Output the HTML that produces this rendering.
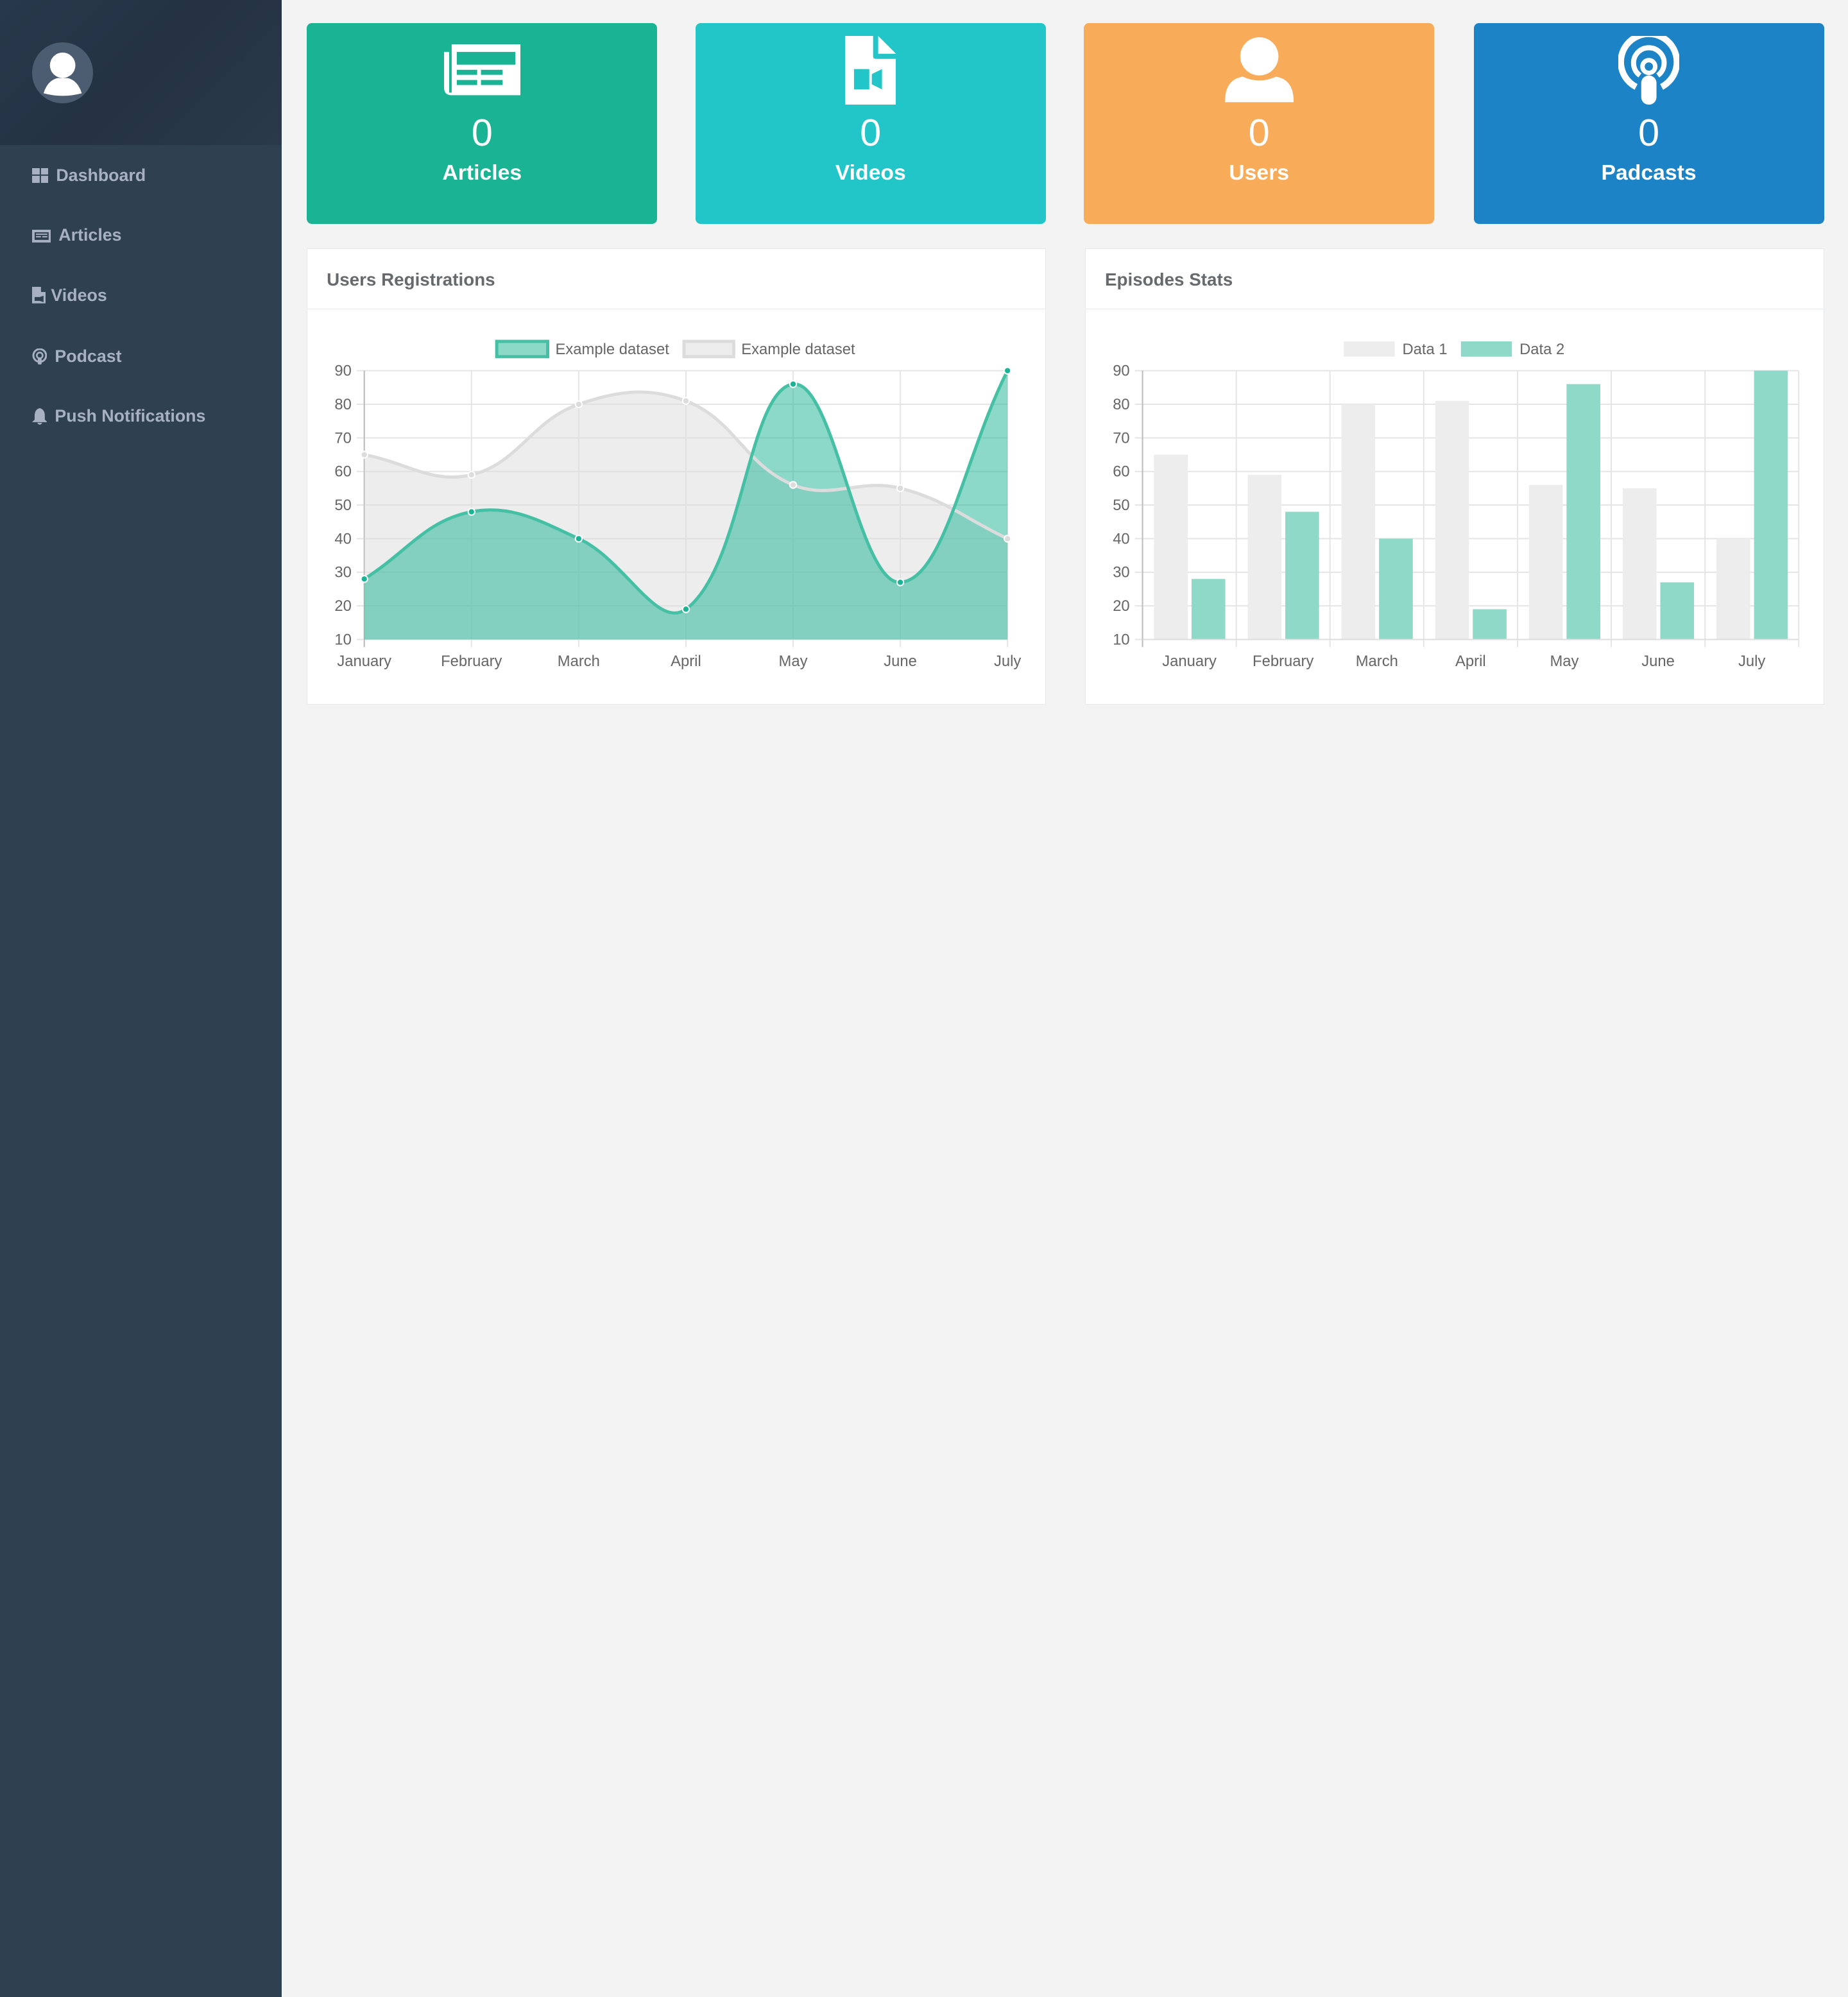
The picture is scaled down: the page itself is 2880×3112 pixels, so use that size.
<!DOCTYPE html>
<html><head><meta charset="utf-8">
<style>
html,body{margin:0;padding:0;}
body{width:2880px;height:3112px;overflow:hidden;background:#f3f3f4;font-family:"Liberation Sans",sans-serif;}
#root{zoom:1.985;width:1451px;height:1568px;position:relative;background:#f3f3f4;}
.side{position:absolute;left:0;top:0;width:221px;height:1568px;background:#2f4050;}
.prof{position:absolute;left:0;top:0;width:221px;height:114px;background:linear-gradient(135deg,#27384a 0%,#243243 50%,#2a3a4b 100%);}
.avatar{position:absolute;left:25px;top:33px;width:48px;height:48px;border-radius:50%;background:#4d5d71;overflow:hidden;}
.nav{position:absolute;left:25px;color:#a7b1c2;font-weight:bold;font-size:13.5px;display:flex;align-items:center;gap:6px;}
.nav svg{fill:#a7b1c2}
.card{position:absolute;top:18px;width:275px;height:158px;border-radius:4px;color:#fff;text-align:center;}
.card .n{position:absolute;top:66px;width:100%;font-size:30px;line-height:40px;font-weight:300;}
.card .t{position:absolute;top:108px;width:100%;font-size:17px;line-height:20px;font-weight:bold;}
.card svg{position:absolute;left:50%;fill:#fff}
.panel{position:absolute;top:195px;height:358px;background:#fff;border:1px solid #e7eaec;box-sizing:border-box;}
.panel h5{margin:0;height:47px;border-bottom:1px solid #e7eaec;font-size:14px;color:#676a6c;line-height:48px;padding-left:15px;font-weight:bold;}
svg text{font-family:"Liberation Sans",sans-serif;font-size:12px;fill:#666}
</style></head><body><div id="root">
<div class="side">
 <div class="prof"><div class="avatar"><svg width="48" height="48" viewBox="0 0 48 48"><circle cx="24" cy="18" r="10" fill="#fff"/><path d="M9 40 Q12 30 20 28 L28 28 Q36 30 39 40 Q24 44 9 40Z" fill="#fff"/></svg></div></div>
 <div class="nav" style="top:130px"><svg width="13" height="12"><rect x="0" y="0" width="6" height="5"/><rect x="7" y="0" width="6" height="5"/><rect x="0" y="6" width="6" height="6"/><rect x="7" y="6" width="6" height="6"/></svg>Dashboard</div>
 <div class="nav" style="top:177px"><svg width="15" height="11"><path d="M0 1h15v10H0z M2 3v6h11V3z M3 4h9v1H3z M3 6h4v1H3z M8 6h4v1H8z" fill-rule="evenodd"/></svg>Articles</div>
 <div class="nav" style="top:224px;gap:4px"><svg width="11" height="13"><path d="M0 0h7v4h4v9H0z M2 8v3h4l3 1V7l-3 1H2z" fill-rule="evenodd"/></svg>Videos</div>
 <div class="nav" style="top:272px"><svg width="12" height="13" viewBox="0 0 12 13"><circle cx="6" cy="5.5" r="5" fill="none" stroke="#a7b1c2" stroke-width="1.5"/><circle cx="6" cy="5.5" r="2.3" fill="none" stroke="#a7b1c2" stroke-width="1.3"/><rect x="4.5" y="7" width="3" height="6" rx="1.4"/></svg>Podcast</div>
 <div class="nav" style="top:319px"><svg width="12" height="13"><path d="M6 0 Q10 1 10 6 L10 9 L12 11 L0 11 L2 9 L2 6 Q2 1 6 0Z M4 11.5h4 Q7 13 6 13 Q5 13 4 11.5Z"/></svg>Push Notifications</div>
</div>

<div class="card" style="left:241px;background:#1ab394"><svg style="margin-left:-30px;top:17px" width="60" height="40" viewBox="0 0 60 40"><path d="M6 0h54v40H6Q0 40 0 34V6h4v32h2z M10 6v10h46V6z M10 20v4h16v-4z M29 20v4h17v-4z M10 28v4h16v-4z M29 28v4h17v-4z" fill-rule="evenodd"/></svg><div class="n">0</div><div class="t">Articles</div></div>
<div class="card" style="left:546px;background:#23c6c8"><svg style="margin-left:-20px;top:10px" width="40" height="54" viewBox="0 0 40 54"><path d="M0 0h22v16q0 2 2 2h16v36H0z M26 0l14 14H26z M7 26v16h12v-16z M21 30v8l8 4V26z" fill-rule="evenodd"/></svg><div class="n">0</div><div class="t">Videos</div></div>
<div class="card" style="left:851px;background:#f8ac59"><svg style="margin-left:-27px;top:10px" width="54" height="54" viewBox="0 0 54 54"><circle cx="27" cy="16" r="15"/><path d="M0 52 Q0 34 14 32 Q27 38 40 32 Q54 34 54 52Z"/></svg><div class="n">0</div><div class="t">Users</div></div>
<div class="card" style="left:1157px;background:#1c84c6"><svg style="margin-left:-24px;top:10px" width="48" height="54" viewBox="0 0 48 54"><path d="M14 40 A22 22 0 1 1 34 40" fill="none" stroke="#fff" stroke-width="5"/><path d="M17 31 A12 12 0 1 1 31 31" fill="none" stroke="#fff" stroke-width="4"/><circle cx="24" cy="24" r="5" fill="none" stroke="#fff" stroke-width="3.5"/><rect x="18" y="31" width="12" height="23" rx="6"/></svg><div class="n">0</div><div class="t">Padcasts</div></div>

<div class="panel" style="left:241px;width:580px"><h5>Users Registrations</h5></div>
<div class="panel" style="left:852px;width:580px"><h5>Episodes Stats</h5></div>
<svg id="ch" width="1451" height="600" style="position:absolute;left:0;top:0"></svg>
</div>
<script>
var s='';
function Y(v){return 502-(v-10)*2.6375;}
var labs=['January','February','March','April','May','June','July'];
for(var i=0;i<=8;i++){var y=Y(10+i*10);s+='<line x1="280" x2="791" y1="'+y+'" y2="'+y+'" stroke="#e5e5e5"/>';s+='<text x="276" y="'+(y+4)+'" text-anchor="end">'+(10+i*10)+'</text>';}
for(var i=0;i<7;i++){var x=286+i*84.17;s+='<line x1="'+x+'" x2="'+x+'" y1="291" y2="508" stroke="#e5e5e5"/>';s+='<text x="'+x+'" y="523" text-anchor="middle">'+labs[i]+'</text>';}
s+='<line x1="286" x2="286" y1="291" y2="508" stroke="#bbb"/>';
function path(d){var p=d.map(function(v,i){return [286+i*84.17,Y(v)];});var t=0.4,str='M'+p[0][0]+' '+p[0][1];
 var cps=[];for(var i=0;i<p.length;i++){var pr=p[Math.max(i-1,0)],c=p[i],nx=p[Math.min(i+1,p.length-1)];
 var d01=Math.hypot(c[0]-pr[0],c[1]-pr[1]),d12=Math.hypot(nx[0]-c[0],nx[1]-c[1]);var fa=d01/(d01+d12||1),fb=d12/(d01+d12||1);fa=isNaN(fa)?0:fa;fb=isNaN(fb)?0:fb;
 cps.push({p:[c[0]-fa*t*(nx[0]-pr[0]),c[1]-fa*t*(nx[1]-pr[1])],n:[c[0]+fb*t*(nx[0]-pr[0]),c[1]+fb*t*(nx[1]-pr[1])]});}
 for(var i=1;i<p.length;i++){str+=' C'+cps[i-1].n.join(' ')+' '+cps[i].p.join(' ')+' '+p[i].join(' ');}return {d:str,p:p};}
var g=path([65,59,80,81,56,55,40]),gr=path([28,48,40,19,86,27,90]);
s+='<path d="'+g.d+' L791 502 L286 502Z" fill="rgba(220,220,220,0.5)"/>';
s+='<path d="'+gr.d+' L791 502 L286 502Z" fill="rgba(26,179,148,0.5)"/>';
s+='<path d="'+g.d+'" fill="none" stroke="#dcdcdc" stroke-width="2.5"/>';
s+='<path d="'+gr.d+'" fill="none" stroke="#46c0a5" stroke-width="2.5"/>';
g.p.forEach(function(q){s+='<circle cx="'+q[0]+'" cy="'+q[1]+'" r="2.6" fill="#dcdcdc" stroke="#fff"/>';});
gr.p.forEach(function(q){s+='<circle cx="'+q[0]+'" cy="'+q[1]+'" r="2.6" fill="#1ab394" stroke="#fff"/>';});
s+='<rect x="390" y="268" width="40" height="12" fill="#8dd9c7" stroke="#46c0a5" stroke-width="2.5"/><text x="436" y="278">Example dataset</text>';
s+='<rect x="537" y="268" width="39" height="12" fill="#ededed" stroke="#dcdcdc" stroke-width="2.5"/><text x="582" y="278">Example dataset</text>';
for(var i=0;i<=8;i++){var y=Y(10+i*10);s+='<line x1="891" x2="1412" y1="'+y+'" y2="'+y+'" stroke="#e5e5e5"/>';s+='<text x="887" y="'+(y+4)+'" text-anchor="end">'+(10+i*10)+'</text>';}
var a=[65,59,80,81,56,55,40],b=[28,48,40,19,86,27,90];
for(var i=0;i<=7;i++){var x=897+i*73.6;s+='<line x1="'+x+'" x2="'+x+'" y1="291" y2="508" stroke="'+(i==0?'#bbb':'#e5e5e5')+'"/>';}
for(var i=0;i<7;i++){var x=897+i*73.6;s+='<rect x="'+(x+9)+'" y="'+Y(a[i])+'" width="26.5" height="'+(502-Y(a[i]))+'" fill="#ededed"/>';
 s+='<rect x="'+(x+38.5)+'" y="'+Y(b[i])+'" width="26.5" height="'+(502-Y(b[i]))+'" fill="#8ed9c8"/>';
 s+='<text x="'+(x+36.8)+'" y="523" text-anchor="middle">'+labs[i]+'</text>';}
s+='<line x1="897" x2="1412" y1="502" y2="502" stroke="#ddd"/>';
s+='<rect x="1055" y="268" width="40" height="12" fill="#ededed"/><text x="1101" y="278">Data 1</text>';
s+='<rect x="1147" y="268" width="40" height="12" fill="#8ed9c8"/><text x="1193" y="278">Data 2</text>';
document.getElementById('ch').innerHTML=s;
</script>
</body></html>
